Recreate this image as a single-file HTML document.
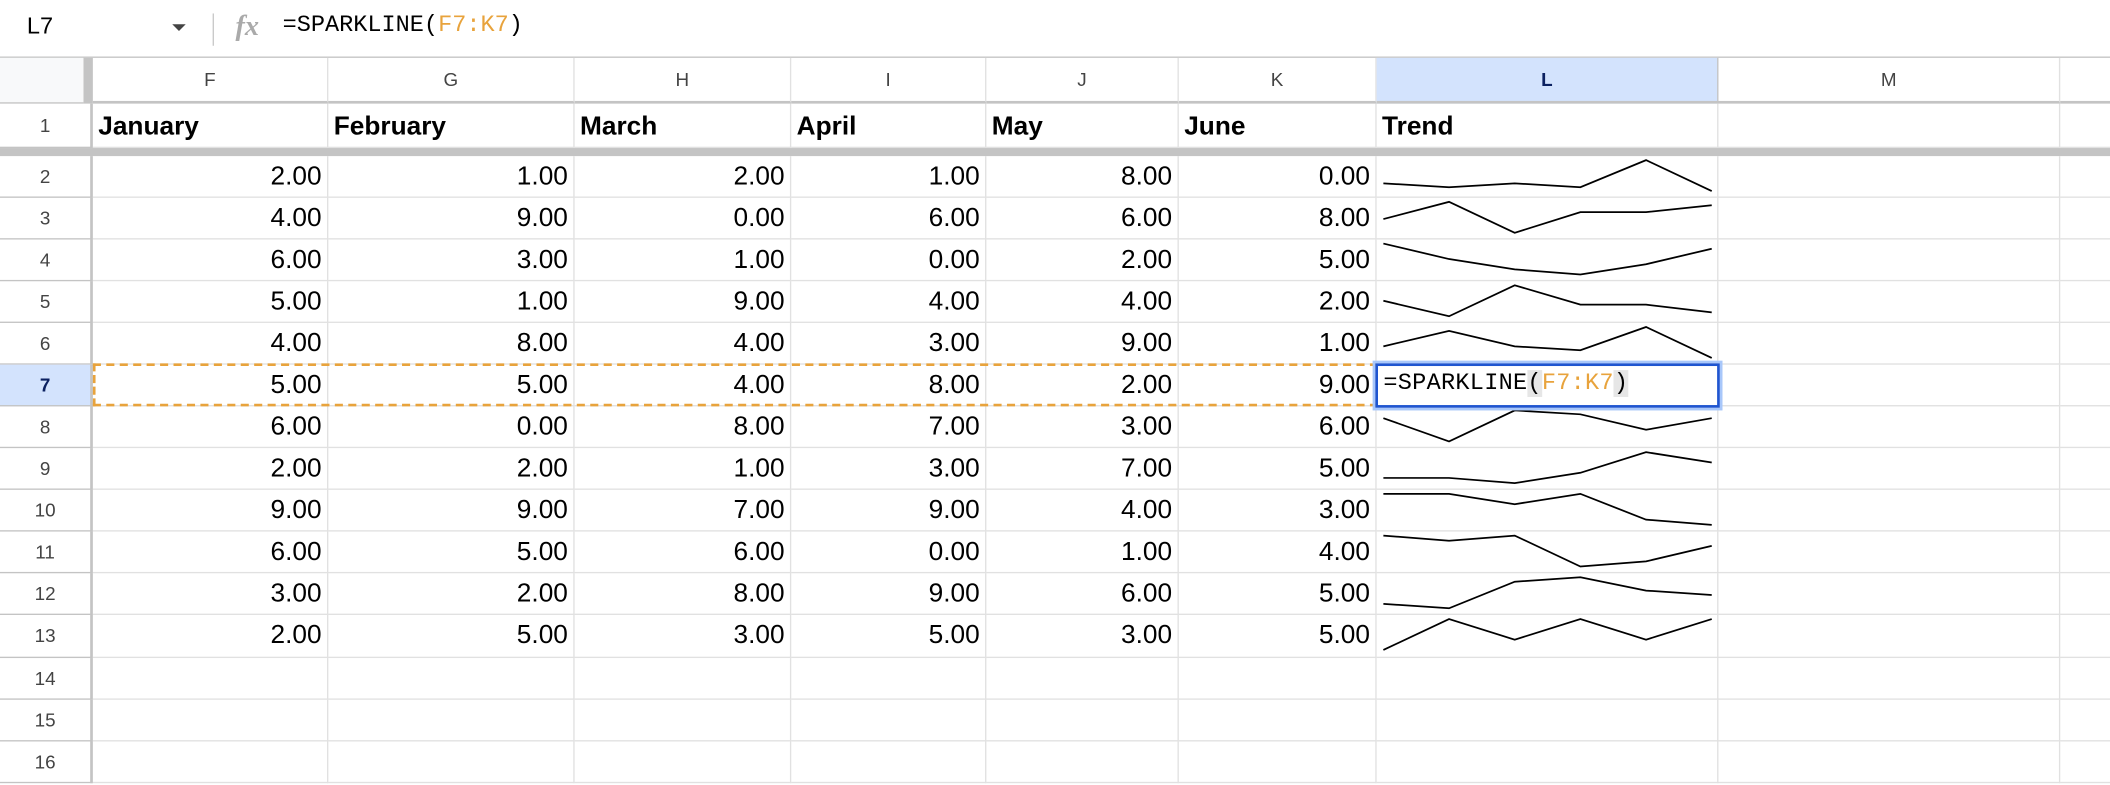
<!DOCTYPE html>
<html><head><style>
*{margin:0;padding:0;box-sizing:border-box}
html,body{width:2110px;height:784px;overflow:hidden;background:#fff}
#w{position:absolute;left:0;top:0;width:1568px;height:583px;transform:scale(1.3457);transform-origin:0 0;font-family:"Liberation Sans",Arial,sans-serif}
.r{position:absolute;left:0;height:31px;display:flex;width:1568px}
.c{border-right:1px solid #e1e1e1;border-bottom:1px solid #e1e1e1;height:100%;font-size:19.5px;color:#000;text-align:right;padding:0 4px;line-height:30px;position:relative;white-space:nowrap}
.n{width:69px;border-right:2px solid #c4c4c4;text-align:center;font-size:14px;color:#444;border-bottom:1px solid #c4c4c4;padding:0}
.F{width:175px}.G{width:183px}.H{width:161px}.I{width:145px}.J{width:143px}.K{width:147px}.L{width:254px}.M{width:254px}.N{width:37px;border-right:none}
svg.s{position:absolute;left:5px;top:3px;width:244px;height:23px;overflow:visible}
svg.s polyline{fill:none;stroke:#000;stroke-width:1.3;vector-effect:non-scaling-stroke}
.mono{font-family:"Liberation Mono",monospace}
.h{text-align:center;font-size:14px;color:#444;line-height:33px;border-bottom:2px solid #c4c4c4}
.b{text-align:left;font-weight:bold;line-height:34px}
</style></head><body><div id="w">
<div style="position:absolute;left:20px;top:9px;font-size:17.5px;color:#000">L7</div>
<div style="position:absolute;left:128px;top:18px;width:0;height:0;border-left:5px solid transparent;border-right:5px solid transparent;border-top:5px solid #444"></div>
<div style="position:absolute;left:158px;top:10px;width:1px;height:24px;background:#c8c8c8"></div>
<div style="position:absolute;left:175px;top:7px;font-family:'Liberation Serif',serif;font-style:italic;font-weight:bold;font-size:21px;color:#aaa">fx</div>
<div class="mono" style="position:absolute;left:210px;top:9px;font-size:17.5px;color:#000;letter-spacing:0px">=SPARKLINE(<span style="color:#e8a33c">F7:K7</span>)</div>
<div style="position:absolute;left:0;top:42px;width:1568px;height:1px;background:#c4c4c4"></div>
<div class="r" style="top:43px;height:34px">
<div class="c n" style="width:62px;border-right:none;background:#f8f9fa"></div>
<div style="width:7px;height:100%;background:#c4c4c4"></div>
<div class="c F h">F</div><div class="c G h">G</div><div class="c H h">H</div><div class="c I h">I</div><div class="c J h">J</div><div class="c K h">K</div>
<div class="c L h" style="color:#0b2161;font-weight:bold;background:#d3e3fd;border-right:1px solid #c4c4c4">L</div>
<div class="c M h">M</div><div class="c N h"></div>
</div>
<div class="r" style="top:77px;height:33px">
<div class="c n" style="line-height:33px">1</div>
<div class="c F b">January</div><div class="c G b">February</div><div class="c H b">March</div><div class="c I b">April</div><div class="c J b">May</div><div class="c K b">June</div><div class="c L b">Trend</div>
<div class="c M"></div><div class="c N"></div>
</div>
<div style="position:absolute;left:0;top:110px;width:1568px;height:6px;background:#c4c4c4"></div>

<div class="r" style="top:116px"><div class="c n">2</div><div class="c F">2.00</div><div class="c G">1.00</div><div class="c H">2.00</div><div class="c I">1.00</div><div class="c J">8.00</div><div class="c K">0.00</div><div class="c L"><svg class="s" viewBox="0 0 5 10" preserveAspectRatio="none"><polyline points="0,7.5 1,8.75 2,7.5 3,8.75 4,0 5,10"/></svg></div><div class="c M"></div><div class="c N"></div></div>
<div class="r" style="top:147px"><div class="c n">3</div><div class="c F">4.00</div><div class="c G">9.00</div><div class="c H">0.00</div><div class="c I">6.00</div><div class="c J">6.00</div><div class="c K">8.00</div><div class="c L"><svg class="s" viewBox="0 0 5 10" preserveAspectRatio="none"><polyline points="0,5.56 1,0 2,10 3,3.33 4,3.33 5,1.11"/></svg></div><div class="c M"></div><div class="c N"></div></div>
<div class="r" style="top:178px"><div class="c n">4</div><div class="c F">6.00</div><div class="c G">3.00</div><div class="c H">1.00</div><div class="c I">0.00</div><div class="c J">2.00</div><div class="c K">5.00</div><div class="c L"><svg class="s" viewBox="0 0 5 10" preserveAspectRatio="none"><polyline points="0,0 1,5 2,8.33 3,10 4,6.67 5,1.67"/></svg></div><div class="c M"></div><div class="c N"></div></div>
<div class="r" style="top:209px"><div class="c n">5</div><div class="c F">5.00</div><div class="c G">1.00</div><div class="c H">9.00</div><div class="c I">4.00</div><div class="c J">4.00</div><div class="c K">2.00</div><div class="c L"><svg class="s" viewBox="0 0 5 10" preserveAspectRatio="none"><polyline points="0,5 1,10 2,0 3,6.25 4,6.25 5,8.75"/></svg></div><div class="c M"></div><div class="c N"></div></div>
<div class="r" style="top:240px"><div class="c n">6</div><div class="c F">4.00</div><div class="c G">8.00</div><div class="c H">4.00</div><div class="c I">3.00</div><div class="c J">9.00</div><div class="c K">1.00</div><div class="c L"><svg class="s" viewBox="0 0 5 10" preserveAspectRatio="none"><polyline points="0,6.25 1,1.25 2,6.25 3,7.5 4,0 5,10"/></svg></div><div class="c M"></div><div class="c N"></div></div>
<div class="r" style="top:271px"><div class="c n" style="background:#d3e3fd;color:#0b2161;font-weight:bold">7</div><div class="c F">5.00</div><div class="c G">5.00</div><div class="c H">4.00</div><div class="c I">8.00</div><div class="c J">2.00</div><div class="c K">9.00</div><div class="c L"></div><div class="c M"></div><div class="c N"></div></div>
<div class="r" style="top:302px"><div class="c n">8</div><div class="c F">6.00</div><div class="c G">0.00</div><div class="c H">8.00</div><div class="c I">7.00</div><div class="c J">3.00</div><div class="c K">6.00</div><div class="c L"><svg class="s" viewBox="0 0 5 10" preserveAspectRatio="none"><polyline points="0,2.5 1,10 2,0 3,1.25 4,6.25 5,2.5"/></svg></div><div class="c M"></div><div class="c N"></div></div>
<div class="r" style="top:333px"><div class="c n">9</div><div class="c F">2.00</div><div class="c G">2.00</div><div class="c H">1.00</div><div class="c I">3.00</div><div class="c J">7.00</div><div class="c K">5.00</div><div class="c L"><svg class="s" viewBox="0 0 5 10" preserveAspectRatio="none"><polyline points="0,8.33 1,8.33 2,10 3,6.67 4,0 5,3.33"/></svg></div><div class="c M"></div><div class="c N"></div></div>
<div class="r" style="top:364px"><div class="c n">10</div><div class="c F">9.00</div><div class="c G">9.00</div><div class="c H">7.00</div><div class="c I">9.00</div><div class="c J">4.00</div><div class="c K">3.00</div><div class="c L"><svg class="s" viewBox="0 0 5 10" preserveAspectRatio="none"><polyline points="0,0 1,0 2,3.33 3,0 4,8.33 5,10"/></svg></div><div class="c M"></div><div class="c N"></div></div>
<div class="r" style="top:395px"><div class="c n">11</div><div class="c F">6.00</div><div class="c G">5.00</div><div class="c H">6.00</div><div class="c I">0.00</div><div class="c J">1.00</div><div class="c K">4.00</div><div class="c L"><svg class="s" viewBox="0 0 5 10" preserveAspectRatio="none"><polyline points="0,0 1,1.67 2,0 3,10 4,8.33 5,3.33"/></svg></div><div class="c M"></div><div class="c N"></div></div>
<div class="r" style="top:426px"><div class="c n">12</div><div class="c F">3.00</div><div class="c G">2.00</div><div class="c H">8.00</div><div class="c I">9.00</div><div class="c J">6.00</div><div class="c K">5.00</div><div class="c L"><svg class="s" viewBox="0 0 5 10" preserveAspectRatio="none"><polyline points="0,8.57 1,10 2,1.43 3,0 4,4.29 5,5.71"/></svg></div><div class="c M"></div><div class="c N"></div></div>
<div class="r" style="top:457px;height:32px"><div class="c n">13</div><div class="c F">2.00</div><div class="c G">5.00</div><div class="c H">3.00</div><div class="c I">5.00</div><div class="c J">3.00</div><div class="c K">5.00</div><div class="c L"><svg class="s" viewBox="0 0 5 10" preserveAspectRatio="none"><polyline points="0,10 1,0 2,6.67 3,0 4,6.67 5,0"/></svg></div><div class="c M"></div><div class="c N"></div></div>
<div class="r" style="top:489px"><div class="c n">14</div><div class="c F"></div><div class="c G"></div><div class="c H"></div><div class="c I"></div><div class="c J"></div><div class="c K"></div><div class="c L"></div><div class="c M"></div><div class="c N"></div></div>
<div class="r" style="top:520px"><div class="c n">15</div><div class="c F"></div><div class="c G"></div><div class="c H"></div><div class="c I"></div><div class="c J"></div><div class="c K"></div><div class="c L"></div><div class="c M"></div><div class="c N"></div></div>
<div class="r" style="top:551px"><div class="c n">16</div><div class="c F"></div><div class="c G"></div><div class="c H"></div><div class="c I"></div><div class="c J"></div><div class="c K"></div><div class="c L"></div><div class="c M"></div><div class="c N"></div></div>

<div style="position:absolute;left:69px;top:270px;width:955px;height:32px;border:2px dashed #e8a33c"></div>
<div style="position:absolute;left:1020px;top:268px;width:260px;height:37px;border:2px solid #a8c7fa"></div>
<div style="position:absolute;left:1022px;top:270px;width:256px;height:33px;border:2px solid #1f55d0;background:#fff"></div>
<div class="mono" style="position:absolute;left:1028px;top:275px;font-size:17.5px;letter-spacing:0.2px;color:#000">=SPARKLINE<span style="background:#e6e6e6">(</span><span style="color:#e8a33c">F7:K7</span><span style="background:#e6e6e6">)</span></div>
</div></body></html>
